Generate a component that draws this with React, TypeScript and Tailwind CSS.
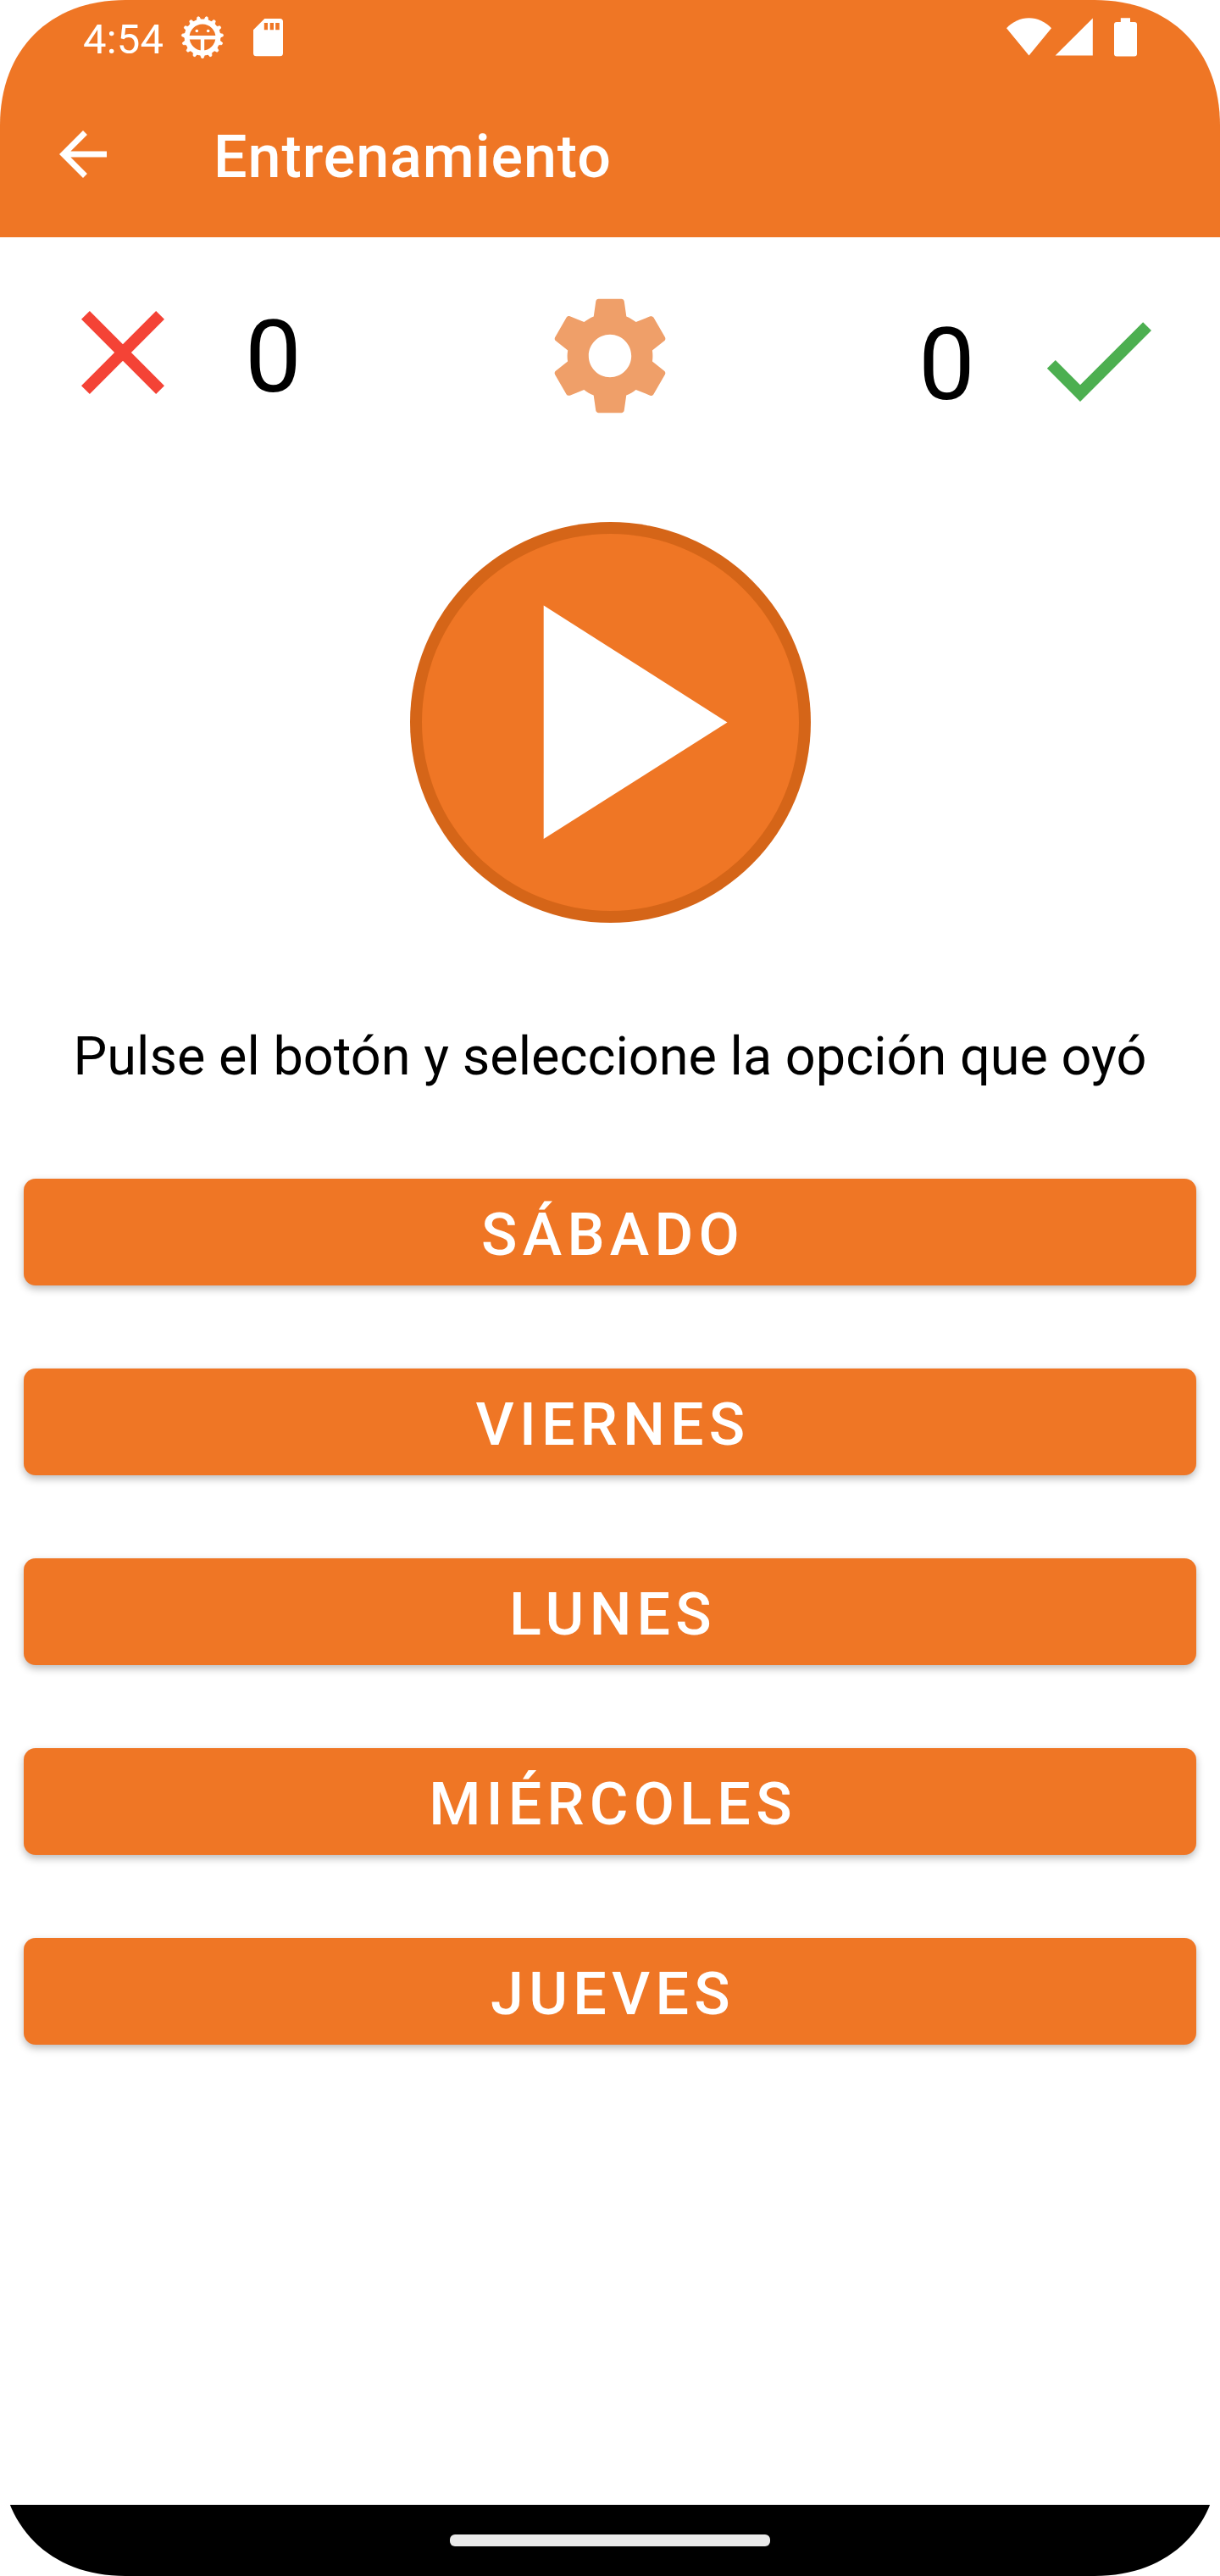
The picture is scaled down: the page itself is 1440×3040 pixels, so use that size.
const OPTIONS = ["SÁBADO", "VIERNES", "LUNES", "MIÉRCOLES", "JUEVES"];

const TEETH = Array.from({ length: 15 }, (_, i) => i * 24);

function DebugIcon() {
  return (
    <svg className="mt-[18px] ml-[20px] h-[52px] w-[52px]" viewBox="-26 -26 52 52" fill="#fff" stroke="#fff">
      <circle r="18.4" fill="none" strokeWidth="6" />
      {TEETH.map((a) => (
        <path key={a} d="M-3.8 19.5 Q-2 20.8 -1.7 23 A1.7 1.7 0 0 0 1.7 23 Q2 20.8 3.8 19.5 Z" strokeWidth="0.7" transform={`rotate(${a})`} />
      ))}
      <path d="M-16 0.2H16M0 0V16" fill="none" strokeWidth="4.4" />
      <circle cx="-6.7" cy="-7.5" r="1.8" stroke="none" />
      <circle cx="6.7" cy="-7.5" r="1.8" stroke="none" />
    </svg>
  );
}

function StatusBar() {
  return (
    <div className="flex h-[84px] items-start text-white">
      <span className="mt-[18px] ml-[98px] w-[95px] whitespace-nowrap text-[49px] leading-[57px] tracking-[0.2px]">4:54</span>
      <DebugIcon />
      <svg className="mt-[22px] ml-[34px] h-[45px] w-[35px]" viewBox="0 0 35 45" fill="#fff">
        <path
          fillRule="evenodd"
          d="M13.3 0H31.5A3.5 3.5 0 0 1 35 3.5V40.7A3.5 3.5 0 0 1 31.5 44.2H3.5A3.5 3.5 0 0 1 0 40.7V13.2ZM12.8 5V13.2H17V5ZM19.7 5V13.2H24V5ZM26.2 5V13.2H30.8V5Z"
        />
      </svg>
      <svg className="mt-[21px] mr-[98px] ml-auto h-[46px] w-[154px]" viewBox="1188 21 154 46" fill="#fff">
        <path d="M1188 33.2C1195 25.8 1204.5 21.2 1214.5 21.2S1234 25.8 1241 33.2L1214.5 65.5Z" />
        <path d="M1245.6 65.6L1289.8 21.6V65.6Z" />
        <path d="M1322.8 21.2H1334V26H1339A3 3 0 0 1 1342 29V63.6A3 3 0 0 1 1339 66.6H1318A3 3 0 0 1 1315 63.6V29A3 3 0 0 1 1318 26H1322.8Z" />
      </svg>
    </div>
  );
}

export default function App() {
  return (
    <div className="flex h-[3040px] w-[1440px] flex-col overflow-hidden bg-white font-['Roboto',sans-serif] text-black [clip-path:path('M0_148C0_58.6_58.6_0_148_0H1292C1381.4_0_1440_58.6_1440_148V2892C1440_2981.4_1381.4_3040_1292_3040H148C58.6_3040_0_2981.4_0_2892Z')]">
      <header className="h-[280px] bg-[#ef7625]">
        <StatusBar />
        <div className="flex h-[196px] items-center text-white">
          <svg className="ml-14 h-[84px] w-[84px]" viewBox="0 0 24 24" fill="currentColor">
            <path d="M20 11H7.83l5.59-5.59L12 4l-8 8 8 8 1.41-1.41L7.83 13H20v-2z" />
          </svg>
          <h1 className="mt-[6px] ml-[112px] text-[70px] leading-[82px] font-medium tracking-[0.95px]">Entrenamiento</h1>
        </div>
      </header>

      <main className="flex flex-1 flex-col">
        <section className="flex h-[336px] items-start pt-[52px]">
          <svg className="ml-[61px] h-[168px] w-[168px]" viewBox="0 0 24 24" fill="#f44336">
            <path d="M19 6.41L17.59 5 12 10.59 6.41 5 5 6.41 10.59 12 5 17.59 6.41 19 12 13.41 17.59 19 19 17.59 13.41 12z" />
          </svg>
          <span className="mt-[20px] ml-[60px] w-[67px] text-center text-[119px] leading-[140px]">0</span>
          <svg className="mt-1 ml-[280px] h-[168px] w-[168px]" viewBox="0 0 24 24" fill="#ef9f69">
            <path d="M19.14 12.94c.04-.3.06-.61.06-.94 0-.32-.02-.64-.07-.94l2.03-1.58c.18-.14.23-.41.12-.61l-1.92-3.32c-.12-.22-.37-.29-.59-.22l-2.39.96c-.5-.38-1.03-.7-1.62-.94l-.36-2.54c-.04-.24-.24-.41-.48-.41h-3.84c-.24 0-.43.17-.47.41l-.36 2.54c-.59.24-1.13.57-1.62.94l-2.39-.96c-.22-.08-.47 0-.59.22L2.74 8.87c-.12.21-.08.47.12.61l2.03 1.58c-.05.3-.09.63-.09.94s.02.64.07.94l-2.03 1.58c-.18.14-.23.41-.12.61l1.92 3.32c.12.22.37.29.59.22l2.39-.96c.5.38 1.03.7 1.62.94l.36 2.54c.05.24.24.41.48.41h3.84c.24 0 .44-.17.47-.41l.36-2.54c.59-.24 1.13-.56 1.62-.94l2.39.96c.22.08.47 0 .59-.22l1.92-3.32c.12-.22.07-.47-.12-.61l-2.01-1.58zM12 15.6c-1.98 0-3.6-1.62-3.6-3.6s1.62-3.6 3.6-3.6 3.6 1.62 3.6 3.6-1.62 3.6-3.6 3.6z" />
          </svg>
          <span className="mt-[29px] ml-[280px] w-[67px] text-center text-[119px] leading-[140px]">0</span>
          <svg className="mt-[9px] ml-[61px] h-[168px] w-[168px]" viewBox="0 0 24 24" fill="#4caf50">
            <path d="M9 16.17L4.83 12l-1.42 1.41L9 19 21 7l-1.41-1.41z" />
          </svg>
        </section>

        <button className="ml-[484px] h-[473px] w-[473px] rounded-full" aria-label="Reproducir">
          <svg className="block h-full w-full" viewBox="0 0 473 473">
            <circle cx="236.5" cy="236.5" r="236.5" fill="#d56518" />
            <circle cx="236.5" cy="236.5" r="222.5" fill="#ef7625" />
            <path d="M157.7 98.5V374L374.5 236.5Z" fill="#fff" />
          </svg>
        </button>

        <p className="mt-[121px] text-center text-[63px] leading-[74px] tracking-[0.02px] whitespace-nowrap">
          Pulse el botón y seleccione la opción que oyó
        </p>

        <div className="mt-[107px] flex flex-col gap-[98px] px-7">
          {OPTIONS.map((label) => (
            <button
              key={label}
              className="h-[126px] rounded-[14px] bg-[#ef7625] pt-[6px] pl-[7px] text-[70px] leading-[120px] font-medium tracking-[6.25px] text-white shadow-[0_4px_10px_rgba(0,0,0,0.27)]"
            >
              {label}
            </button>
          ))}
        </div>
      </main>

      <footer className="flex h-[84px] justify-center bg-black pt-[35px]">
        <div className="h-[14px] w-[378px] rounded-[6px] bg-[#eaeaea]" />
      </footer>
    </div>
  );
}
